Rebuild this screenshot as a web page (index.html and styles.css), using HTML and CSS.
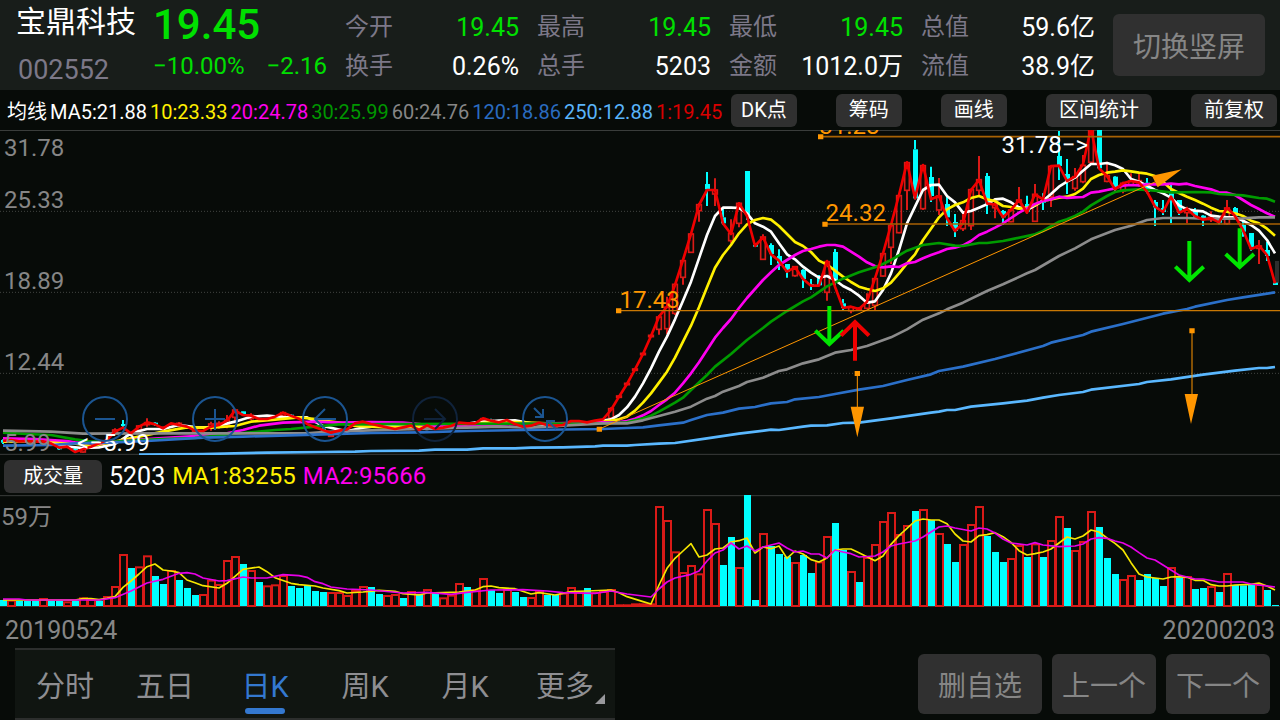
FILE: index.html
```html
<!DOCTYPE html>
<html lang="zh-CN">
<head>
<meta charset="utf-8">
<meta name="viewport" content="width=device-width, initial-scale=1">
<title>宝鼎科技 002552</title>
<link rel="stylesheet" href="styles.css">
</head>
<body>
<div class="app">
  <header class="quote">
    <div class="stock">
      <h1 class="stock-name">宝鼎科技</h1>
      <span class="stock-code">002552</span>
    </div>
    <div class="price">
      <strong class="price-now">19.45</strong>
      <div class="price-change"><span>−10.00%</span><span>−2.16</span></div>
    </div>
    <dl class="stats">
      <div class="stat"><dt>今开</dt><dd class="down">19.45</dd></div>
      <div class="stat"><dt>最高</dt><dd class="down">19.45</dd></div>
      <div class="stat"><dt>最低</dt><dd class="down">19.45</dd></div>
      <div class="stat"><dt>总值</dt><dd>59.6亿</dd></div>
      <div class="stat"><dt>换手</dt><dd>0.26%</dd></div>
      <div class="stat"><dt>总手</dt><dd>5203</dd></div>
      <div class="stat"><dt>金额</dt><dd>1012.0万</dd></div>
      <div class="stat"><dt>流值</dt><dd>38.9亿</dd></div>
    </dl>
    <button class="rotate" type="button">切换竖屏</button>
  </header>

  <section class="toolbar">
    <div class="averages">
      <span class="white">均线</span>
      <span class="white">MA5:21.88</span>
      <span class="yellow">10:23.33</span>
      <span class="magenta">20:24.78</span>
      <span class="green">30:25.99</span>
      <span class="gray">60:24.76</span>
      <span class="blue">120:18.86</span>
      <span class="sky">250:12.88</span>
      <span class="red">1:19.45</span>
    </div>
    <div class="tools">
      <button class="chip" type="button">DK点</button>
      <button class="chip" type="button">筹码</button>
      <button class="chip" type="button">画线</button>
      <button class="chip" type="button">区间统计</button>
      <button class="chip" type="button">前复权</button>
    </div>
  </section>

  <main class="charts">
    <section class="price-chart">
      <svg id="price" class="plot" viewBox="0 0 3840 975" preserveAspectRatio="none" aria-label="日K"></svg>
      <span class="tag axis axis-1">31.78</span>
      <span class="tag axis axis-2">25.33</span>
      <span class="tag axis axis-3">18.89</span>
      <span class="tag axis axis-4">12.44</span>
      <span class="tag axis axis-5">5.99</span>
      <span class="tag level level-1">31.28</span>
      <span class="tag level level-2">24.32</span>
      <span class="tag level level-3">17.43</span>
      <span class="tag peak">31.78−&gt;</span>
      <span class="tag trough">&lt;−5.99</span>
      <div class="controls">
        <button class="round" type="button" aria-label="缩小"><svg viewBox="0 0 46 46"><circle cx="23" cy="23" r="22"/><path d="M13 23h20"/></svg></button>
        <button class="round" type="button" aria-label="放大"><svg viewBox="0 0 46 46"><circle cx="23" cy="23" r="22"/><path d="M13 23h20M23 13v21"/></svg></button>
        <button class="round" type="button" aria-label="左移"><svg viewBox="0 0 46 46"><circle cx="23" cy="23" r="22"/><path d="M34 23H13M23 13L13 23l10 10"/></svg></button>
        <button class="round" type="button" aria-label="右移" disabled><svg viewBox="0 0 46 46"><circle cx="23" cy="23" r="22"/><path d="M12 23h21M23 13l10 10-10 10"/></svg></button>
        <button class="round" type="button" aria-label="收起"><svg viewBox="0 0 46 46"><circle cx="23" cy="23" r="22"/><path d="M12 12l9 9M21 13v8h-8M34 33l-8-8M33 25h-8v8"/></svg></button>
      </div>
    </section>
    <section class="volume-head">
      <button class="chip chip-volume" type="button">成交量</button>
      <span class="white volume-now">5203</span>
      <span class="yellow">MA1:83255</span>
      <span class="magenta">MA2:95666</span>
    </section>
    <section class="volume-chart">
      <svg id="volume" class="plot" viewBox="0 15 3840 336" preserveAspectRatio="none" aria-label="成交量"></svg>
      <span class="tag volume-max">59万</span>
    </section>
    <div class="dates"><time datetime="2019-05-24">20190524</time><time datetime="2020-02-03">20200203</time></div>
  </main>

  <footer class="bottom">
    <nav class="tabs">
      <button class="tab" type="button">分时</button>
      <button class="tab" type="button">五日</button>
      <button class="tab active" type="button" aria-current="true">日K</button>
      <button class="tab" type="button">周K</button>
      <button class="tab" type="button">月K</button>
      <button class="tab more" type="button">更多</button>
    </nav>
    <div class="actions">
      <button class="action" type="button">删自选</button>
      <button class="action" type="button">上一个</button>
      <button class="action" type="button">下一个</button>
    </div>
  </footer>
</div>
<script src="chart.js"></script>
</body>
</html>
```

FILE: styles.css
```css
* { box-sizing: border-box; }

body {
  margin: 0;
  background: #070b08;
  color: #fff;
  font-family: Roboto, "Noto Sans CJK SC", sans-serif;
}

button {
  margin: 0;
  padding: 0;
  border: 0;
  background: none;
  color: inherit;
  font: inherit;
  cursor: pointer;
}

.app {
  display: flex;
  flex-direction: column;
  min-height: 100vh;
  overflow: hidden;
}

.white { color: #fff; }
.yellow { color: #fff000; }
.magenta { color: #f0e; }
.green { color: #009600; }
.gray { color: #868686; }
.blue { color: #2a6cc0; }
.sky { color: #5ab4fa; }
.red { color: #d80000; }

/* Quote header */
.quote {
  display: flex;
  align-items: flex-start;
  height: 90px;
  padding: 0 15px 0 16px;
  background: #181d1a;
}

.stock {
  display: flex;
  flex-direction: column;
  width: 137px;
}

.stock-name {
  margin: 0;
  font-size: 30px;
  font-weight: 400;
  line-height: 44px;
  white-space: nowrap;
}

.stock-code {
  padding-left: 2px;
  color: #7c7888;
  font-size: 27px;
  line-height: 52px;
}

.price {
  display: flex;
  flex-direction: column;
  width: 192px;
  color: #00e000;
}

.price-now {
  font-size: 42px;
  font-weight: 500;
  line-height: 50px;
}

.price-change {
  display: flex;
  justify-content: space-between;
  padding-right: 18px;
  font-size: 24px;
  line-height: 32px;
}

.stats {
  display: grid;
  flex: 1;
  grid-template-columns: repeat(4, 1fr);
  column-gap: 18px;
  margin: 0 18px 0 0;
  padding-top: 8px;
  font-size: 25px;
  line-height: 39px;
}

.stat {
  display: flex;
  justify-content: space-between;
  white-space: nowrap;
}

.stat dt { color: #7c7888; font-size: 24px; }
.stat dd { margin: 0; }
.stat .down { color: #00e000; }

.rotate {
  width: 152px;
  height: 62px;
  margin-top: 14px;
  border-radius: 6px;
  background: #303030;
  color: #868686;
  font-size: 28px;
}

/* Moving-average legend and tools */
.toolbar {
  display: flex;
  align-items: center;
  height: 40px;
  padding: 0 3px 0 7px;
}

.averages {
  display: flex;
  align-items: baseline;
  gap: 3px;
  width: 724px;
  font-size: 20px;
  white-space: nowrap;
}

.tools {
  display: flex;
  flex: 1;
  justify-content: space-between;
}

.chip {
  height: 33px;
  padding: 0 13px;
  border-radius: 6px;
  background: #303030;
  font-size: 20px;
  line-height: 33px;
  white-space: nowrap;
}

.tools .chip:first-child { padding: 0 10px; }

/* Charts */
.plot {
  display: block;
  width: 100%;
  height: 100%;
}

.price-chart {
  position: relative;
  height: 325px;
  overflow: hidden;
}

.tag {
  position: absolute;
  font-size: 24px;
  line-height: 28px;
  white-space: nowrap;
}

.axis { left: 4px; color: #868686; }
.axis-1 { top: 4px; }
.axis-2 { top: 56px; }
.axis-3 { top: 137px; }
.axis-4 { top: 218px; }
.axis-5 { top: 299px; }

.level { color: #ff9600; }
.level-1 { top: -18px; left: 64%; }
.level-2 { top: 69px; left: 64.5%; }
.level-3 { top: 156px; left: 48.4%; }
.peak { top: 1px; right: 15%; }
.trough { top: 299px; left: 77px; }

.controls {
  position: absolute;
  bottom: 13px;
  left: 82px;
  display: flex;
  gap: 64px;
}

.round {
  width: 46px;
  height: 46px;
  color: #1b5591;
}

.round:disabled { color: #10233b; }

.round svg {
  display: block;
  width: 46px;
  height: 46px;
  fill: none;
  stroke: currentColor;
  stroke-width: 2;
}

.volume-head {
  display: flex;
  align-items: center;
  gap: 7px;
  height: 40px;
  padding: 2px 0 0 4px;
  font-size: 24px;
}

.chip-volume { width: 98px; }
.volume-now { font-size: 25px; }

.volume-chart {
  position: relative;
  height: 112px;
}

.volume-max {
  top: 8px;
  left: 1px;
  color: #868686;
}

.dates {
  display: flex;
  justify-content: space-between;
  padding: 6px 5px 0;
  color: #868686;
  font-size: 25px;
  line-height: 35px;
}

/* Bottom navigation */
.bottom {
  display: flex;
  justify-content: space-between;
  align-items: flex-start;
  height: 72px;
  padding: 0 10px 0 15px;
}

.tabs {
  display: flex;
  height: 72px;
  border-top: 2px solid #2c2e2d;
  border-bottom: 2px solid #2c2e2d;
  background: #101511;
}

.tab {
  position: relative;
  width: 100px;
  color: #8e8e92;
  font-size: 29px;
}

.tab.active { color: #3478d0; }

.tab.active::after {
  position: absolute;
  bottom: 4px;
  left: 30px;
  width: 40px;
  height: 6px;
  border-radius: 3px;
  background: #3478d0;
  content: "";
}

.tab.more::after {
  position: absolute;
  right: 10px;
  bottom: 14px;
  border-bottom: 10px solid #98989c;
  border-left: 10px solid transparent;
  content: "";
}

.actions {
  display: flex;
  gap: 10px;
  padding-top: 6px;
}

.action {
  height: 60px;
  padding: 0 10px;
  border-radius: 6px;
  background: #303030;
  color: #868686;
  font-size: 28px;
}

.action:first-child { padding: 0 20px; }
```

FILE: chart.js
```js
// Each bar is 24 chart units wide; centre of bar i is 24 * i + 9.
const NS = "http://www.w3.org/2000/svg";
const STEP = 24;
const cx = i => STEP * i + 9;
const RED = "#d91a17";
const CYAN = "#00ffff";

function add(svg, tag, attrs) {
  const el = document.createElementNS(NS, tag);
  for (const key in attrs) el.setAttribute(key, attrs[key]);
  svg.appendChild(el);
}

// Series text: "bar:value bar:value ..."
function series(svg, color, width, text) {
  const points = text.trim().split(/\s+/).map(p => {
    const [i, y] = p.split(":").map(Number);
    return cx(i) + "," + y;
  }).join(" ");
  add(svg, "polyline", { points, fill: "none", stroke: color, "stroke-width": width, "stroke-linejoin": "round" });
}

function path(svg, d, stroke, width, extra = {}) {
  add(svg, "path", { d, fill: "none", stroke, "stroke-width": width, ...extra });
}

const price = document.getElementById("price");
path(price, "M0 1.5H3840M0 973H3840", "#3a3d3b", 3);
path(price, "M0 244H3840M0 487H3840M0 730H3840", "#424542", 3, { "stroke-dasharray": "3 6" });

// Candles: bar, direction, high, body top, body bottom, low
const candles = `0 C 928 930 938 942;7 C 944 948 958 960;9 C 950 956 964 968;10 R 950 956 966 968;14 R 895 900 908 910;
15 C 870 882 888 892;17 R 885 888 900 904;18 R 865 878 884 890;19 C 876 878 884 888;20 R 890 892 898 902;22 R 876 880 886 892;
24 R 890 898 904 906;26 R 875 882 890 902;27 R 874 880 888 896;28 R 855 870 885 895;29 R 836 840 862 880;30 C 843 844 854 856;
31 R 850 856 866 870;35 R 845 848 856 862;36 C 852 854 860 864;40 C 892 896 904 906;41 R 906 914 919 920;49 R 892 896 900 902;
51 R 884 890 898 900;60 R 864 866 872 876;61 C 866 869 873 878;69 R 882 886 890 892;76 R 832 836 864 866;
77 R 796 798 802 803;78 R 759 760 764 765;79 R 715 717 721 722;80 R 669 670 674 675;81 R 615 616 620 621;
82 R 555 561 598 614;83 R 500 532 596 612;84 R 460 463 550 555;85 R 388 392 442 464;86 R 310 312 367 368;
87 R 220 224 242 275;88 C 126 162 178 228;89 R 145 180 192 228;90 C 235 262 280 284;91 R 268 310 332 340;
92 R 217 220 280 292;93 C 123 123 255 270;94 C 340 345 350 351;95 R 313 321 388 389;96 C 340 345 372 405;
97 C 358 378 400 420;98 C 402 402 425 443;99 R 408 410 437 440;100 C 418 420 447 474;101 C 447 462 468 480;
102 C 435 443 466 468;103 R 390 395 487 512;104 C 357 366 450 474;105 C 507 520 534 543;106 R 528 532 542 550;
107 R 532 535 540 543;108 R 490 516 535 537;109 R 443 446 526 540;110 R 368 371 438 440;111 R 283 287 352 402;
112 R 195 197 308 310;113 R 96 98 181 240;114 C 30 58 205 208;115 R 105 107 236 240;116 C 110 141 198 216;
117 R 144 198 240 255;118 C 201 222 262 288;119 C 252 276 303 321;120 R 250 272 296 303;121 R 176 179 287 300;
122 R 78 149 181 200;123 C 129 138 222 252;124 R 205 222 233 265;125 C 240 243 262 285;126 R 235 240 275 277;
127 R 171 210 236 238;128 C 197 222 245 250;129 R 162 193 274 276;130 C 190 207 218 240;131 R 107 109 200 231;
132 C 3 78 108 150;133 C 87 132 153 192;134 R 114 140 175 182;135 R 75 106 155 160;136 R -10 -5 97 100;
137 C -10 -10 115 117;138 R 95 137 154 157;139 C 138 140 175 188;140 R 155 160 183 190;141 R 130 153 165 168;
142 R 130 152 158 170;143 C 144 158 186 190;144 C 210 216 232 288;145 C 210 234 246 255;146 C 165 190 205 279;
147 C 210 210 248 255;148 R 230 236 248 280;149 C 234 240 260 264;150 C 255 257 270 288;151 R 244 262 268 276;
152 C 262 270 278 283;153 R 210 234 281 284;154 C 231 234 258 264;155 C 270 285 305 320;156 C 309 309 355 362;
157 R 330 348 355 402;158 C 336 360 378 393;159 C 458 458 465 465`;
add(price, "rect", { x: 3825, y: 393, width: 12, height: 66, fill: "#2c2e2d" });
candles.split(";").forEach(row => {
  const [i, dir, ...v] = row.trim().split(" ");
  const [high, top, bottom, low] = v.map(Number);
  const x = cx(+i);
  const color = dir === "R" ? RED : CYAN;
  path(price, `M${x} ${high}V${top}M${x} ${bottom}V${low}`, color, 6);
  if (dir === "R") {
    add(price, "rect", { x: x - 7, y: top, width: 14, height: bottom - top, fill: "none", stroke: color, "stroke-width": 5 });
  } else {
    add(price, "rect", { x: x - 6, y: top, width: 15, height: bottom - top, fill: color });
  }
});

series(price, "#ffffff", 8, `0:933 4:933 6:937 8:950 10:954 12:952 14:942 16:910 18:897 20:897 22:885 24:891 26:892 29:875 31:860 33:857
35:861 38:862 40:888 43:904 45:893 47:888 50:890 53:897 56:888 59:878 62:872 64:871 66:880 69:887 72:882 75:872 76:868 77:855 78:832
79:800 80:760 81:715 82:665 83:620 84:568 85:512 86:455 87:385 88:315 89:258 90:233 91:233 92:234 93:250 94:280 95:290 96:305 97:340
98:373 99:388 100:410 101:428 102:443 103:438 104:450 105:468 106:480 107:497 108:518 109:514 110:480 111:430 112:360 113:280 114:230
115:180 116:165 117:164 118:198 119:217 120:248 121:243 122:233 123:223 124:208 125:206 126:217 127:232 128:240 129:227 130:212 131:192
132:170 133:155 134:143 135:122 136:102 137:102 138:99 139:106 140:117 141:147 142:155 143:167 144:180 145:190 146:203 147:226 148:238
149:242 150:244 151:257 152:260 153:262 154:262 155:272 156:285 157:302 158:330 159:370`);
series(price, "#fff000", 8, `0:935 5:932 8:937 11:948 14:935 17:920 20:905 23:892 26:893 29:888 31:875 34:869 37:862 39:867 40:872 42:878
44:888 48:892 51:890 56:887 58:883 61:877 64:876 68:880 71:881 75:875 76:872 77:868 78:860 79:842 80:818 81:790 82:758 83:725 84:683
85:635 86:587 87:532 88:472 89:413 90:375 91:345 92:310 93:283 94:270 95:264 96:269 97:288 98:312 99:336 100:348 101:366 102:392 103:404
104:422 105:440 106:456 107:470 108:477 109:483 110:475 111:458 112:430 113:400 114:373 115:330 116:296 117:262 118:238 119:225 120:217
121:204 122:198 123:208 124:213 125:228 126:231 127:236 128:233 129:226 130:212 131:208 132:203 133:200 134:192 135:176 136:147 137:135
138:128 139:125 140:121 141:124 142:128 143:131 144:138 145:155 146:177 147:189 148:200 149:210 150:221 151:233 152:243 153:245 154:250
155:258 156:272 157:280 158:296 159:317`);
series(price, "#ff00f0", 8, `0:925 4:927 6:930 8:933 9:937 12:940 16:930 20:924 24:918 28:910 30:900 32:887 35:878 39:875 42:878 46:876
50:878 54:887 58:890 61:885 64:882 75:877 77:876 78:873 79:866 80:856 81:843 82:825 83:808 84:788 85:760 86:730 87:697 88:660 89:623
90:594 91:567 92:534 93:504 94:477 95:450 96:427 97:405 98:390 99:375 100:363 101:357 102:350 103:345 104:345 105:350 106:365 107:380
108:397 109:408 110:412 111:409 112:411 113:400 114:396 115:385 116:375 117:367 118:357 119:353 120:346 121:333 122:315 123:305 124:293
125:280 126:264 127:248 128:235 129:222 130:213 131:208 132:200 133:204 134:202 135:201 136:188 137:185 138:180 139:175 140:167 141:165
142:166 143:163 145:163 146:161 147:163 148:161 149:168 151:178 152:187 153:188 154:195 155:210 156:225 157:237 158:250 159:260`);
series(price, "#009b00", 8, `0:908 3:912 6:915 9:928 11:935 14:935 17:930 20:927 24:924 28:913 31:907 34:900 36:897 39:890 42:883 75:880
78:877 80:865 81:857 82:845 84:818 85:803 86:780 88:735 89:710 91:672 93:630 95:594 96:575 98:543 100:514 101:502 103:469 105:446 107:427
109:412 110:402 111:390 113:362 115:345 117:339 119:347 120:348 122:339 123:339 125:333 126:328 129:313 130:303 132:275 133:268 134:258
135:245 136:226 138:198 139:186 140:181 142:178 144:182 146:187 149:186 151:187 152:192 155:196 157:204 158:206 159:215`);
series(price, "#8c8c8c", 8, `0:902 6:905 10:911 20:910 38:910 40:906 45:902 52:897 58:893 62:890 66:893 70:887 75:880 78:880 80:871 82:858
84:845 86:830 88:806 89:798 90:785 92:768 93:756 95:743 97:723 98:718 100:700 102:688 104:668 106:660 108:648 111:622 113:598 115:569
117:550 118:538 120:518 123:483 125:463 128:430 129:420 132:378 134:355 136:328 139:300 141:287 143:270 145:264 148:264 151:267 155:265
157:262 159:262`);
series(price, "#2b70c9", 8, `0:947 6:945 9:940 13:938 18:933 25:923 30:920 40:913 46:909 52:907 58:903 65:900 75:897 78:894 80:892 82:886
85:878 86:870 88:855 90:848 92:836 94:831 96:820 98:816 99:808 102:801 104:792 107:779 110:768 113:750 116:733 117:723 120:710 124:687
130:648 131:638 135:615 136:605 140:582 145:551 148:537 149:530 153:510 155:502 159:487`);
series(price, "#5ab8ff", 8, `17:974 25:972 33:968 40:966 44:965 46:963 52:962 54:959 58:959 60:955 64:955 66:953 70:952 74:949 75:947 78:947
79:945 82:941 84:939 88:925 92:911 96:899 97:900 100:890 101:887 103:886 105:879 107:878 111:865 116:848 117:845 118:840 119:840 121:830
125:820 128:812 130:803 132:795 135:786 136:779 142:762 143:756 146:748 150:734 154:722 157:714 158:714 159:711`);
series(price, "#f00000", 8, `0:933 1:930 2:934 3:933 4:935 5:934 6:940 7:953 8:950 9:966 10:958 11:950 12:940 13:930 14:905 15:893 16:910
17:890 18:877 19:883 20:895 21:880 22:885 23:890 24:902 25:903 26:890 27:885 28:872 29:842 30:855 31:857 32:867 33:867 34:860 35:848
36:857 37:866 38:882 39:892 40:900 41:908 42:902 43:898 44:880 45:875 46:882 47:887 48:892 49:897 50:892 51:887 52:900 53:886 54:897
55:893 56:888 57:878 58:880 59:880 60:865 61:872 62:877 63:870 64:882 65:890 66:887 67:878 68:885 69:887 70:885 71:873 72:873 73:877
74:872 75:868 76:840 77:800 78:762 79:718 80:672 81:618 82:560 83:530 84:465 85:390 86:312 87:225 88:180 89:180 90:280 91:312 92:220
93:258 94:348 95:322 96:373 97:392 98:425 99:412 100:447 101:467 102:467 103:393 104:470 105:534 106:530 107:537 108:515 109:445 110:370
111:285 112:195 113:97 114:205 115:105 116:208 117:198 118:265 119:303 120:280 121:180 122:150 123:220 124:224 125:262 126:240 127:210
128:248 129:193 130:208 131:108 132:107 133:153 134:140 135:103 136:-5 137:115 138:138 139:178 140:160 141:153 142:157 143:185 144:230
145:246 146:200 147:248 148:237 149:258 150:269 151:265 152:277 153:233 154:258 155:300 156:357 157:347 158:375 159:460`);

// Drawn levels, trend line and arrows
const ORANGE = "#ff9600";
path(price, "M2462 20H3840M2475 282H3840", "#a86204", 5);
path(price, "M1855 542H3840", "#c87804", 4);
path(price, "M1798 897L3465 156M2572 730V832M3576 602V794", ORANGE, 3);
add(price, "path", {
  fill: ORANGE,
  d: "M2454 13h16v15h-16zM2467 275h16v15h-16zM1848 535h16v15h-16zM1790 890h16v15h-16zM2564 723h16v15h-16zM3568 595h16v15h-16z" +
     "M3545 118L3456 137L3473 172zM2552 830H2592L2572 922zM3554 792H3594L3573 882z"
});
path(price, "M2488 528V643M2446 602L2488 642L2531 602M3568 333V451M3526 410L3568 450L3611 410M3719 295V411M3677 372L3719 411L3762 372", "#00e600", 12);
path(price, "M2565 692V575M2523 617L2565 576L2607 617", "#f00000", 12);

// Volume bars: direction and top edge, one per bar
const volume = document.getElementById("volume");
path(volume, "M0 17H3840M0 350H3840", "#3a3d3b", 3);
const bars = `C330 R332 C332 C332 C332 R327 C332 C332 R337 C332 R325 R330 C332 R321 R291 R195 C234 R232 R199 C258 C282 R243 C270 C294 C315
R315 R272 R285 R213 R201 C222 R243 C276 R289 R286 R258 C288 C294 C285 C303 C306 R309 R309 R318 R303 R291 C291 C312 R318 R315 C324 R306
C312 R300 C308 R325 R317 R282 C291 R301 R267 C300 C309 R300 C306 C321 R324 R306 C315 C315 R311 R294 R307 C294 R309 R306 R300 R346 R346
R343 R343 R343 R51 R93 R187 R249 R228 R253 R60 R102 C225 C141 R234 C15 C330 R132 C168 C192 C200 R219 C195 C249 R217 R141 C99 C180 R246
C276 R204 R165 R96 R69 R135 R108 C63 R60 C90 R132 C162 C216 R165 R105 R51 C138 C186 C216 R207 R168 C201 R163 C201 R153 R81 C114 R183
R156 R66 C111 C204 C252 R270 R258 C270 C252 C264 C288 R234 C262 R261 C297 C294 R291 C306 R252 C285 C286 C285 R285 C300 C345`;
bars.trim().split(/\s+/).forEach((bar, i) => {
  const top = +bar.slice(1);
  const attrs = { x: STEP * i, y: top, width: 21, height: 348 - top };
  add(volume, "rect", bar[0] === "R"
    ? { ...attrs, fill: "#070b08", stroke: RED, "stroke-width": 6 }
    : { ...attrs, fill: CYAN });
});
series(volume, "#f5e600", 5, `0:330 9:330 10:326 11:326 12:329 13:325 14:320 15:292 16:273 17:252 18:230 19:222 20:240 21:243 22:248 23:270
24:278 25:287 27:294 28:280 30:238 32:231 33:245 34:263 36:280 37:284 39:288 40:294 42:302 43:309 45:306 47:301 49:304 50:311 52:315 53:309
55:308 57:306 59:300 60:290 61:288 62:293 64:296 66:312 67:308 69:315 71:305 73:303 76:300 77:308 78:320 80:335 81:342 82:285 83:235 84:205
85:183 86:161 87:201 88:195 89:177 90:174 91:156 92:152 93:144 94:189 95:171 96:176 97:168 98:205 99:183 100:192 101:209 102:216 103:204
104:180 105:177 106:177 107:188 108:200 109:212 110:198 111:163 112:137 113:115 114:93 115:87 116:90 117:90 118:101 119:132 120:153 121:156
122:137 123:134 124:128 125:140 126:157 127:182 128:195 129:191 130:186 131:177 132:159 133:141 134:147 135:138 136:120 137:126 138:144
139:160 140:180 141:218 142:252 143:261 144:264 145:267 146:261 147:260 148:262 149:271 150:271 151:284 152:288 153:288 154:285 156:283
157:279 158:288 159:300`);
series(volume, "#e800e8", 5, `0:327 2:327 3:330 12:330 14:323 16:303 18:279 20:268 22:250 23:248 24:252 25:264 27:273 28:272 30:261 31:264
33:264 35:254 37:257 38:262 39:275 40:281 41:291 43:297 46:300 50:309 53:307 56:313 58:307 61:300 65:299 68:303 70:308 74:310 76:303 78:312
80:318 81:321 82:297 83:276 84:264 86:253 87:243 88:213 89:189 90:180 91:159 92:177 93:168 94:183 95:171 96:165 97:159 98:174 99:186
100:183 101:192 102:192 103:204 104:180 105:186 106:191 107:201 109:198 110:186 111:168 112:162 114:153 115:141 116:126 117:111 118:108
119:114 121:123 122:114 123:117 124:129 125:147 126:159 128:165 129:158 130:165 132:170 134:168 135:162 136:147 137:143 138:145 139:153
140:159 141:171 142:188 143:204 144:210 145:225 146:240 147:255 148:261 149:267 150:267 152:276 155:276 156:282 159:291`);
```
